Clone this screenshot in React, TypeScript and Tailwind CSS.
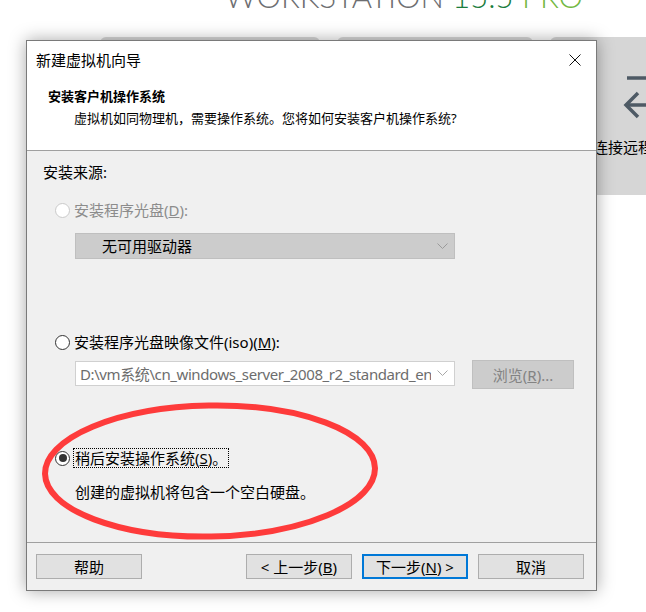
import React from "react"

const ui = "font-['Noto_Sans','Noto_Sans_CJK_SC',sans-serif]"

function Radio({ state }: { state: "disabled" | "off" | "on" }) {
  const ring = state === "disabled" ? "border-[#cacaca]" : "border-[#333333]"
  return (
    <span className={`w-[15px] h-[15px] rounded-full border ${ring} bg-white flex items-center justify-center shrink-0`}>
      {state === "on" && <span className="w-[8px] h-[8px] rounded-full bg-[#333333]" />}
    </span>
  )
}

function Chevron({ color }: { color: string }) {
  return (
    <svg width="11" height="7" viewBox="0 0 11 7" className="shrink-0">
      <polyline points="0.5,0.5 5.5,5.5 10.5,0.5" fill="none" stroke={color} strokeWidth="1" />
    </svg>
  )
}

function Btn({ children, primary, cls }: { children: React.ReactNode; primary?: boolean; cls: string }) {
  const b = primary ? "border-2 border-[#0078d7]" : "border border-[#adadad]"
  return (
    <div className={`${cls} w-[106px] h-[25px] bg-[#e1e1e1] ${b} flex items-center justify-center text-[15px] leading-[20px] text-black`}>
      {children}
    </div>
  )
}

export default function App() {
  return (
    <div className={`relative w-[646px] h-[612px] overflow-hidden bg-white ${ui}`}>
      {/* app behind the dialog */}
      <div className="h-[37px] overflow-hidden pl-[225px]">
        <div className="-mt-[19px] text-[31px] leading-none font-light font-['Lato',sans-serif] whitespace-nowrap">
          <span className="text-[#6d6e71]">WORKSTATION</span>{" "}
          <span className="text-[#1b7d3d]">15.5</span>{" "}
          <span className="text-[#72b842]">PRO</span>
        </div>
      </div>
      <div className="flex items-start">
        <div className="ml-[100px] w-[220px] h-[20px] rounded-t-[6px] bg-[#d8d8d8]" />
        <div className="ml-[17px] w-[196px] h-[20px] rounded-t-[6px] bg-[#d8d8d8]" />
        <div className="ml-[17px] flex-1 h-[158px] rounded-tl-[6px] bg-[#d6d6d6] overflow-hidden">
          <svg width="96" height="95" className="block">
            <line x1="77" y1="41" x2="100" y2="41" stroke="#4e5a65" strokeWidth="3.5" />
            <line x1="77" y1="68" x2="100" y2="68" stroke="#4e5a65" strokeWidth="3.5" />
            <polyline points="88,56 76,68 88,80" fill="none" stroke="#4e5a65" strokeWidth="3.5" />
          </svg>
          <div className="mt-[5px] pl-[43px] text-[15px] leading-[20px] text-black whitespace-nowrap">连接远程服务器</div>
        </div>
      </div>

      {/* wizard dialog */}
      <div className="absolute left-[26px] top-[40px] w-[571px] h-[551px] border border-[#7a7a7a] bg-white flex flex-col shadow-[0_0_16px_rgba(0,0,0,0.35)]">
        <div className="h-[38px] flex items-center justify-between pl-[9px] pr-[15px] text-[15px] leading-[20px] text-black">
          <span>新建虚拟机向导</span>
          <svg width="12" height="12" viewBox="0 0 12 12">
            <line x1="0.5" y1="0.5" x2="11.5" y2="11.5" stroke="#111" strokeWidth="1" />
            <line x1="11.5" y1="0.5" x2="0.5" y2="11.5" stroke="#111" strokeWidth="1" />
          </svg>
        </div>
        <div className="h-[72px] border-b border-[#a0a0a0] pt-[7px] text-[13px] leading-[20px] text-black">
          <div className="pl-[21px] font-bold">安装客户机操作系统</div>
          <div className="mt-[2px] pl-[47px]">虚拟机如同物理机，需要操作系统。您将如何安装客户机操作系统?</div>
        </div>

        <div className="h-[392px] bg-[#f0f0f0] border-b border-[#a0a0a0] pt-[11px] text-[15px] leading-[20px] text-black">
          <div className="pl-[16px]">安装来源:</div>

          <div className="mt-[18px] pl-[28px] h-[20px] flex items-center gap-[4px] text-[#8c8c8c]">
            <Radio state="disabled" />
            <span>安装程序光盘(<span className="underline">D</span>):</span>
          </div>
          <div className="mt-[13px] ml-[48px] w-[380px] h-[26px] bg-[#cccccc] border border-[#bfbfbf] flex items-center justify-between pl-[26px] pr-[6px]">
            <span>无可用驱动器</span>
            <Chevron color="#9a9a9a" />
          </div>

          <div className="mt-[73px] pl-[28px] h-[20px] flex items-center gap-[4px]">
            <Radio state="off" />
            <span>安装程序光盘映像文件(iso)(<span className="underline">M</span>):</span>
          </div>
          <div className="mt-[8px] ml-[48px] flex items-start">
            <div className="mt-[1px] w-[380px] h-[25px] bg-white border border-[#d0d0d0] flex items-center justify-between pr-[6px]">
              <div className="w-[355px] pl-[4px] overflow-hidden whitespace-nowrap tracking-[-0.4px] text-[#6d6d6d]">D:\vm系统\cn_windows_server_2008_r2_standard_enterprise</div>
              <Chevron color="#a8a8a8" />
            </div>
            <div className="ml-[17px] w-[102px] h-[29px] bg-[#cccccc] border border-[#bfbfbf] flex items-center justify-center text-[#838383] whitespace-nowrap">
              浏览(<span className="underline">R</span>)...
            </div>
          </div>

          <div className="mt-[59px] pl-[28px] h-[20px] flex items-center gap-[3px]">
            <Radio state="on" />
            <span className="h-[20px] border border-dotted border-black px-[1px] leading-[18px]">
              稍后安装操作系统(<span className="underline">S</span>)。
            </span>
          </div>
          <div className="mt-[14px] pl-[48px]">创建的虚拟机将包含一个空白硬盘。</div>
        </div>

        <div className="flex-1 bg-[#f0f0f0] pt-[11px] flex items-start">
          <Btn cls="ml-[9px]">帮助</Btn>
          <Btn cls="ml-[104px]">&lt; 上一步(<span className="underline">B</span>)</Btn>
          <Btn cls="ml-[10px]" primary>下一步(<span className="underline">N</span>) &gt;</Btn>
          <Btn cls="ml-[10px]">取消</Btn>
        </div>
      </div>

      {/* red annotation */}
      <svg className="absolute left-0 top-0 pointer-events-none" width="646" height="612">
        <ellipse cx="210" cy="471" rx="165" ry="65.5" fill="none" stroke="#fe3b3b" strokeWidth="6" transform="rotate(-1 210 471)" />
      </svg>
    </div>
  )
}
